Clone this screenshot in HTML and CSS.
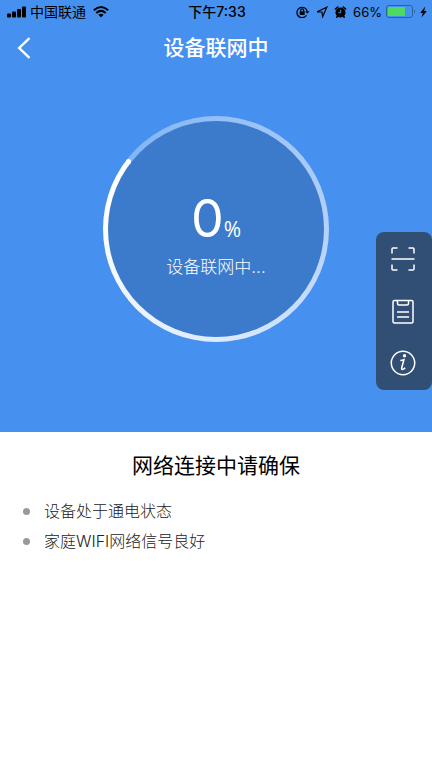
FILE: index.html
```html
<!DOCTYPE html>
<html lang="zh-CN">
<head>
<meta charset="utf-8">
<meta name="viewport" content="width=device-width, initial-scale=1">
<title>设备联网中</title>
<link rel="stylesheet" href="styles.css">
</head>
<body>
<section class="hero">
  <div class="status">
    <div class="status-left">
      <svg width="19" height="12" viewBox="0 0 19 12" aria-hidden="true"><rect x="0" y="7.500" width="4" height="4" rx="1"/><rect x="5" y="5.500" width="4" height="6" rx="1"/><rect x="10" y="3" width="4" height="8.500" rx="1"/><rect x="15" y=".5" width="4" height="11" rx="1"/></svg>
      <span class="carrier">中国联通</span>
      <svg class="wifi" width="16" height="12" viewBox="0 0 16 12" fill="none" stroke="#000" stroke-width="2" aria-hidden="true"><path d="M.8 4.3Q8-2.2 15.2 4.3M3.3 7Q8 2.8 12.7 7"/><path d="M5.4 8.8Q8 6.6 10.6 8.8L8 11.5Z" fill="#000" stroke="none"/></svg>
    </div>
    <time class="clock">下午7:33</time>
    <div class="status-right">
      <svg width="14" height="12" viewBox="0 0 14 12" fill="none" stroke="#000" stroke-width="1.2" aria-hidden="true"><path d="M10.500 9.300A5.200 5.200 0 1 1 11.200 5.400"/><path d="M9.200 5.200h4.200l-2 2.600z" fill="#000" stroke="none"/><rect x="3.700" y="5.300" width="5" height="3.600" fill="#000" stroke="none"/><path d="M4.700 5.500V4.400a1.500 1.500 0 0 1 3 0v1.100"/></svg>
      <svg class="locate" width="12" height="12" viewBox="0 0 12 12" fill="none" stroke="#000" stroke-width="1.2" aria-hidden="true"><path d="M1.200 5.800 10.800 1.200 6.600 10.800 6 6Z"/></svg>
      <svg class="alarm" width="13" height="12" viewBox="0 0 13 12" aria-hidden="true"><circle cx="6.500" cy="6.500" r="5"/><path d="M1.400 3 3.700 1M9.300 1l2.300 2M3.600 10l-.8 1.200M9.400 10l.8 1.200" fill="none" stroke="#000" stroke-width="1.600" stroke-linecap="round"/><path d="M6.700 3.800v3H4.300" fill="none" stroke="#4690ef"/></svg>
      <span class="percent">66%</span>
      <svg width="30" height="14" viewBox="0 0 30 14" aria-hidden="true"><rect x=".5" y=".5" width="26" height="12" rx="2.500" fill="none" stroke="#2c609f"/><rect x="2" y="2" width="17" height="9" rx="1" fill="#4cd964"/><path d="M28 4.500q2 2 0 4z" fill="#2c609f"/></svg>
      <svg width="7" height="12" viewBox="0 0 7 12" aria-hidden="true"><path d="M5.200 .5 .2 6.900h2.600L1.600 11.500 6.800 5H4.200z"/></svg>
    </div>
  </div>
  <header class="nav">
    <button class="back" type="button" aria-label="返回"><svg width="14" height="22" viewBox="0 0 14 22" fill="none" stroke="#fff" stroke-width="2.400"><path d="M12.500 1.200 2.200 11l10.300 9.800"/></svg></button>
    <h1>设备联网中</h1>
  </header>
  <div class="dial">
    <svg class="cap" viewBox="0 0 226 226" aria-hidden="true"><circle cx="25.500" cy="45.500" r="2.500" fill="#fff"/></svg>
    <p class="value"><span class="number">0</span><span class="unit">%</span></p>
    <p class="caption">设备联网中...</p>
  </div>
  <div class="tools">
    <button type="button" aria-label="扫一扫"><svg width="26" height="26" viewBox="0 0 26 26"><path d="M2 7.500V3Q2 2 3 2H7.500M18.500 2H23Q24 2 24 3V7.500M24 18.500V23Q24 24 23 24H18.500M7.500 24H3Q2 24 2 23V18.500M1.500 13h23"/></svg></button>
    <button type="button" aria-label="记录"><svg width="26" height="26" viewBox="0 0 26 26"><rect x="3" y="2.500" width="20" height="22.500" rx="1.500"/><path d="M7.500 3v2.500Q7.500 7 9 7h8Q18.500 7 18.500 5.500V3M7 14h12M7 19h12"/></svg></button>
    <button type="button" aria-label="信息"><svg width="26" height="26" viewBox="0 0 26 26"><circle cx="13" cy="13" r="11.700"/><circle cx="14.500" cy="5.800" r="1.700" class="dot"/><path d="M10.300 10.500Q12 10.500 13.900 9.800L11.600 18.200Q11.300 21 15.300 17.800"/></svg></button>
  </div>
</section>
<main class="tips">
  <h2>网络连接中请确保</h2>
  <ul>
    <li>设备处于通电状态</li>
    <li>家庭WIFI网络信号良好</li>
  </ul>
</main>
</body>
</html>
```
FILE: styles.css
```css
* { box-sizing: border-box; }
body {
  margin: 0;
  background: #fff;
  color: #000;
  font-family: Inter, "Noto Sans CJK SC", sans-serif;
}
h1, h2, p, ul { margin: 0; padding: 0; font-weight: 400; }
svg { display: block; flex: none; }
button { border: 0; padding: 0; background: none; display: grid; place-items: center; }

.hero { position: relative; background: #4690ef; padding-bottom: 90px; }

.status {
  display: grid;
  grid-template-columns: 1fr auto 1fr;
  align-items: center;
  height: 24px;
  padding: 0 5px 0 7px;
  font-size: 14px;
  line-height: 24px;
}
.status-left, .status-right { display: flex; align-items: center; gap: 4px; white-space: nowrap; }
.status-right { justify-content: flex-end; }
.wifi { margin-left: 3px; }
.clock { font-weight: 500; }
.percent { font-size: 13px; }
.locate { margin: 0 2px; }
.alarm { margin-right: 2px; }

.nav { display: grid; grid-template-columns: 48px 1fr 48px; align-items: center; height: 48px; }
.back { height: 48px; }
.nav h1 { color: #fff; font-size: 21px; line-height: 48px; font-weight: 500; text-align: center; }

.dial {
  position: relative;
  width: 226px;
  height: 226px;
  margin: 44px auto 0;
  padding-top: 70px;
  border: 5px solid transparent;
  border-radius: 50%;
  background:
    linear-gradient(#3c7bcc, #3c7bcc) padding-box,
    conic-gradient(from 308deg, #82b4f5, #b2d0f9 38%, #d9e8fd 62%, #fff 92%, #fff) border-box;
  color: #fff;
  text-align: center;
}
.cap { position: absolute; inset: -5px; }
.value { display: flex; justify-content: center; align-items: baseline; line-height: 56px; }
.number { font-size: 52px; }
.unit { font-family: "Open Sans", sans-serif; font-size: 21px; line-height: 20px; }
.caption { margin-top: 8px; font-size: 17px; line-height: 24px; font-weight: 300; }

.tools {
  position: absolute;
  top: 232px;
  right: 0;
  width: 56px;
  padding: 1px 2px 1px 0;
  display: grid;
  grid-auto-rows: 52px;
  border-radius: 8px;
  background: #314f75;
}
.tools svg { fill: none; stroke: #fff; stroke-width: 1.5; }
.tools .dot { fill: #fff; stroke: none; }

.tips { padding: 18px 20px; }
.tips h2 { font-size: 21px; line-height: 32px; text-align: center; }
.tips ul { margin-top: 14px; list-style: none; }
.tips li {
  display: flex;
  align-items: center;
  gap: 14px;
  padding-left: 3px;
  color: #222;
  font-size: 16px;
  line-height: 30px;
  font-weight: 300;
}
.tips li::before { content: ""; width: 7px; height: 7px; border-radius: 50%; background: #999; }
```
